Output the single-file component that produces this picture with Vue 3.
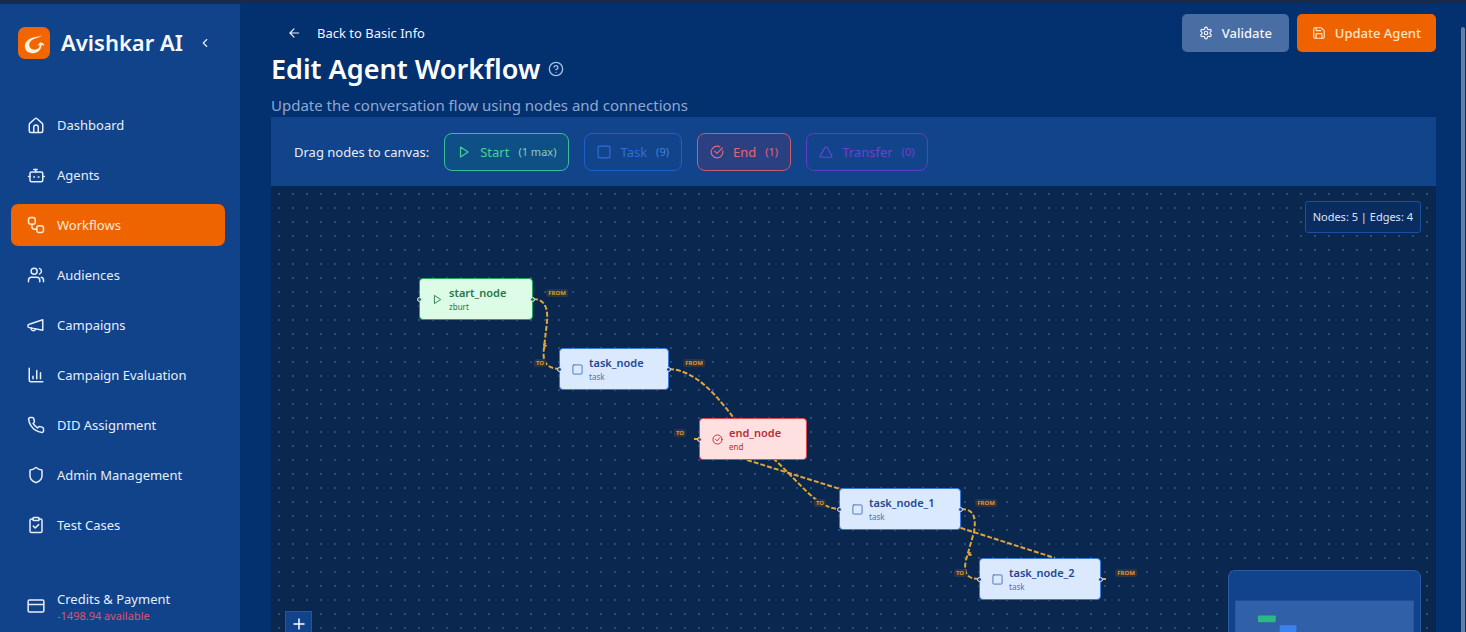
<script setup>
import { ref } from 'vue'

const icons = {
  house: '<path d="M4 9.5 10.6 3.6a2 2 0 0 1 2.8 0L20 9.5a3 3 0 0 1 1 2.2V20a2 2 0 0 1-2 2H5a2 2 0 0 1-2-2v-8.300a3 3 0 0 1 1-2.200z"/><path d="M9 22v-7a3 3 0 0 1 6 0v7"/>',
  bot: '<path d="M9 4.500h4.500M11 4.500 12 8"/><rect x="4" y="8" width="17" height="13" rx="2"/><path d="M2 14h2M21 14h2M9 14.500h1M15 14.500h1"/>',
  workflow: '<rect x="2" y="2" width="9" height="9" rx="3"/><rect x="13" y="13" width="9" height="9" rx="3"/><path d="M6.500 11v3a3.500 3.500 0 0 0 3.500 3.500h3"/>',
  users: '<circle cx="9.500" cy="7" r="4"/><path d="M2 21v-2a4 4 0 0 1 4-4h7a4 4 0 0 1 4 4v2M16.500 3.200a4 4 0 0 1 0 7.600M22 21v-2a4 4 0 0 0-3-3.870"/>',
  megaphone: '<path d="m3 11 18-6v14L3 15.500a2.300 2.300 0 0 1 0-4.500z"/><path d="M11.500 17.500a3 3 0 0 1-5.800-1.500"/>',
  chart: '<path d="M3 3v16a2 2 0 0 0 2 2h16M8 17v-3.500M13 17V6M18 17V9"/>',
  phone: '<path d="M22 16.920v3a2 2 0 0 1-2.180 2 19.790 19.790 0 0 1-8.630-3.070 19.500 19.500 0 0 1-6-6 19.790 19.790 0 0 1-3.070-8.670A2 2 0 0 1 4.110 2h3a2 2 0 0 1 2 1.720 12.840 12.840 0 0 0 .7 2.810 2 2 0 0 1-.45 2.110L8.090 9.910a16 16 0 0 0 6 6l1.270-1.270a2 2 0 0 1 2.110-.45 12.840 12.840 0 0 0 2.810.7A2 2 0 0 1 22 16.920z"/>',
  shield: '<path d="M20 13c0 5-3.500 7.500-7.660 8.950a1 1 0 0 1-.67-.01C7.500 20.500 4 18 4 13V6a1 1 0 0 1 1-1c2 0 4.500-1.200 6.240-2.720a1.170 1.170 0 0 1 1.520 0C14.510 3.810 17 5 19 5a1 1 0 0 1 1 1z"/>',
  clipboard: '<rect x="8" y="2" width="8" height="4" rx="1"/><path d="M16 4h2a2 2 0 0 1 2 2v14a2 2 0 0 1-2 2H6a2 2 0 0 1-2-2V6a2 2 0 0 1 2-2h2M8.500 13.500l2.500 2.500 4.500-4.500"/>',
  card: '<rect x="1.500" y="4" width="21" height="16" rx="2"/><path d="M2 10h20"/>',
  chevron: '<path d="m15 18-6-6 6-6"/>',
  arrow: '<path d="m12 19-7-7 7-7M20 12H5"/>',
  help: '<circle cx="12" cy="12" r="10"/><path d="M9.090 9a3 3 0 0 1 5.830 1c0 2-3 3-3 3M12 17h.01"/>',
  gear: '<path d="M12.220 2h-.44a2 2 0 0 0-2 2v.18a2 2 0 0 1-1 1.730l-.43.25a2 2 0 0 1-2 0l-.15-.08a2 2 0 0 0-2.730.73l-.22.38a2 2 0 0 0 .73 2.730l.15.1a2 2 0 0 1 1 1.720v.51a2 2 0 0 1-1 1.740l-.15.09a2 2 0 0 0-.73 2.730l.22.38a2 2 0 0 0 2.730.73l.15-.08a2 2 0 0 1 2 0l.43.25a2 2 0 0 1 1 1.730V20a2 2 0 0 0 2 2h.44a2 2 0 0 0 2-2v-.18a2 2 0 0 1 1-1.730l.43-.25a2 2 0 0 1 2 0l.15.08a2 2 0 0 0 2.730-.73l.22-.39a2 2 0 0 0-.73-2.730l-.15-.08a2 2 0 0 1-1-1.740v-.5a2 2 0 0 1 1-1.740l.15-.09a2 2 0 0 0 .73-2.730l-.22-.38a2 2 0 0 0-2.730-.73l-.15.08a2 2 0 0 1-2 0l-.43-.25a2 2 0 0 1-1-1.730V4a2 2 0 0 0-2-2z"/><circle cx="12" cy="12" r="3"/>',
  save: '<path d="M15.200 3a2 2 0 0 1 1.400.6l3.800 3.800a2 2 0 0 1 .6 1.400V19a2 2 0 0 1-2 2H5a2 2 0 0 1-2-2V5a2 2 0 0 1 2-2z"/><path d="M17 21v-7a1 1 0 0 0-1-1H8a1 1 0 0 0-1 1v7M7 3v4a1 1 0 0 0 1 1h7"/>',
  play: '<path d="M6 3.500 19 12 6 20.500z"/>',
  square: '<rect x="2" y="2" width="20" height="20" rx="2"/>',
  check: '<path d="M21.800 10A10 10 0 1 1 17 3.340M8 10.500l4 4L21.500 5"/>',
  badge: '<circle cx="12" cy="12" r="10"/><path d="m7 11 4 4 6-7"/>',
  triangle: '<path d="M13.730 4a2 2 0 0 0-3.460 0l-8 14A2 2 0 0 0 4 21h16a2 2 0 0 0 1.730-3z"/>',
  plus: '<path d="M12 2v20M2 12h20"/>',
  minus: '<path d="M3 12h18"/>',
}

const active = ref('Workflows')
const menu = [
  ['Dashboard', 'house'],
  ['Agents', 'bot'],
  ['Workflows', 'workflow'],
  ['Audiences', 'users'],
  ['Campaigns', 'megaphone'],
  ['Campaign Evaluation', 'chart'],
  ['DID Assignment', 'phone'],
  ['Admin Management', 'shield'],
  ['Test Cases', 'clipboard'],
]
const palette = [
  { name: 'Start', count: '(1 max)', icon: 'play', kind: 'start' },
  { name: 'Task', count: '(9)', icon: 'square', kind: 'task' },
  { name: 'End', count: '(1)', icon: 'check', kind: 'end' },
  { name: 'Transfer', count: '(0)', icon: 'triangle', kind: 'transfer' },
]
const nodes = [
  { name: 'start_node', type: 'zburt', kind: 'start', icon: 'play', x: 148, y: 92, w: 114 },
  { name: 'task_node', type: 'task', kind: 'task', icon: 'square', x: 288, y: 162, w: 110 },
  { name: 'end_node', type: 'end', kind: 'end', icon: 'badge', x: 428, y: 232, w: 108 },
  { name: 'task_node_1', type: 'task', kind: 'task', icon: 'square', x: 568, y: 302, w: 122 },
  { name: 'task_node_2', type: 'task', kind: 'task', icon: 'square', x: 708, y: 372, w: 122 },
]
const tags = [
  { text: 'FROM', x: 286, y: 107 },
  { text: 'TO', x: 269, y: 177 },
  { text: 'FROM', x: 423, y: 177 },
  { text: 'TO', x: 409, y: 247 },
  { text: 'TO', x: 549, y: 317 },
  { text: 'FROM', x: 715, y: 317 },
  { text: 'TO', x: 689, y: 387 },
  { text: 'FROM', x: 855, y: 387 },
]
const edges = [
  'M262 113C275 113 277 124 276 136L273 162C271 177 276 182 288 183',
  'M398 183C426 184 448 213 462 231L504 274C532 300 546 322 568 323',
  'M690 323C704 323 705 333 703 346L695 374C692 387 696 393 708 393',
  'M476 274L569 303L690 342L784 372',
  'M428 253h-6',
  'M830 393h6',
]
</script>

<template>
  <div class="app">
    <aside class="sidebar">
      <div class="brand">
        <svg class="logo" viewBox="0 0 32 32" aria-hidden="true">
          <rect width="32" height="32" rx="7" fill="#f16503" />
          <path d="M24 8.500c-2 1.800-4 2.200-6 2.700-4 1.100-6.700 3.500-6.700 6.600 0 3 2.300 4.900 5.200 4.900 3 0 5-1.800 5.300-4.700l-2.300.8 2.600-3.500 3.400 1.200.9 2.700-2.600-1.700c-.2 4.600-3.600 8.800-8.800 8.800-4.600 0-8.200-2.600-8.200-7 0-4.800 4-8 9.700-9.100 2.800-.6 5.200-.8 7.500-1.700z" fill="#fff0d8" />
        </svg>
        <span class="brand-name">Avishkar AI</span>
        <button class="collapse" aria-label="Collapse sidebar"><svg class="icon small" viewBox="0 0 24 24" v-html="icons.chevron" /></button>
      </div>
      <nav class="menu">
        <a v-for="[label, icon] in menu" :key="label" href="#" class="item" :class="{ active: active === label }" @click.prevent="active = label">
          <svg class="icon nav-icon" viewBox="0 0 24 24" v-html="icons[icon]" />
          <span>{{ label }}</span>
        </a>
        <a href="#" class="item credits" @click.prevent>
          <svg class="icon nav-icon" viewBox="0 0 24 24" v-html="icons.card" />
          <span class="stack"><span>Credits &amp; Payment</span><span class="balance">-1498.94 available</span></span>
        </a>
      </nav>
    </aside>

    <main class="main">
      <header class="header">
        <div class="heading">
          <a class="back" href="#" @click.prevent><svg class="icon small" viewBox="0 0 24 24" v-html="icons.arrow" />Back to Basic Info</a>
          <div class="title-row">
            <h1>Edit Agent Workflow</h1>
            <button class="help" aria-label="Help"><svg class="icon" viewBox="0 0 24 24" v-html="icons.help" /></button>
          </div>
          <p class="subtitle">Update the conversation flow using nodes and connections</p>
        </div>
        <div class="actions">
          <button class="btn validate"><svg class="icon small" viewBox="0 0 24 24" v-html="icons.gear" />Validate</button>
          <button class="btn update"><svg class="icon small" viewBox="0 0 24 24" v-html="icons.save" />Update Agent</button>
        </div>
      </header>

      <section class="palette">
        <span class="hint">Drag nodes to canvas:</span>
        <button v-for="p in palette" :key="p.name" class="chip" :class="p.kind" draggable="true">
          <svg class="icon small" viewBox="0 0 24 24" v-html="icons[p.icon]" />
          <span>{{ p.name }}</span>
          <span class="count">{{ p.count }}</span>
        </button>
      </section>

      <section class="canvas">
        <svg class="edges" aria-hidden="true">
          <path v-for="d in edges" :key="d" :d="d" />
          <circle cx="274" cy="159" r="1" />
          <circle cx="699" cy="368" r="1" />
        </svg>
        <span v-for="(t, i) in tags" :key="i" class="tag" :style="{ left: t.x + 'px', top: t.y + 'px' }">{{ t.text }}</span>
        <div v-for="n in nodes" :key="n.name" class="node" :class="n.kind" :style="{ left: n.x + 'px', top: n.y + 'px', width: n.w + 'px' }">
          <svg class="icon node-icon" viewBox="0 0 24 24" v-html="icons[n.icon]" />
          <span class="stack"><strong>{{ n.name }}</strong><small>{{ n.type }}</small></span>
          <i class="port in"></i>
          <i v-if="n.kind !== 'end'" class="port out"></i>
        </div>
        <div class="stats">Nodes: 5 | Edges: 4</div>
        <div class="controls">
          <button aria-label="Zoom in"><svg class="icon" viewBox="0 0 24 24" v-html="icons.plus" /></button>
          <button aria-label="Zoom out"><svg class="icon" viewBox="0 0 24 24" v-html="icons.minus" /></button>
          <button aria-label="Fit view"><svg class="icon" viewBox="0 0 24 24" v-html="icons.square" /></button>
          <button aria-label="Run"><svg class="icon" viewBox="0 0 24 24" v-html="icons.play" /></button>
        </div>
        <svg class="minimap" viewBox="0 0 193 145" aria-hidden="true">
          <rect x="6" y="30" width="181" height="90" fill="#2f60a8" />
          <g>
            <rect x="29" y="45" width="18" height="7" rx="1" fill="#2fb887" />
            <rect x="51" y="55" width="17" height="7" rx="1" fill="#3b82f0" />
            <rect x="73" y="66" width="17" height="7" rx="1" fill="#ef4444" />
            <rect x="95" y="77" width="19" height="7" rx="1" fill="#3b82f0" />
            <rect x="117" y="88" width="19" height="7" rx="1" fill="#3b82f0" />
          </g>
        </svg>
      </section>
    </main>
    <div class="scrollbar"></div>
  </div>
</template>

<style>
body {
  background: #03306f;
}
</style>

<style scoped>
* {
  box-sizing: border-box;
}
.app {
  position: relative;
  display: flex;
  height: 100vh;
  overflow: hidden;
  border-top: 4px solid #1a2a4b;
  background: #03306f;
  color: #e6eefb;
  font-family: "Noto Sans", "Open Sans", sans-serif;
  font-size: 13px;
  line-height: 20px;
}
button {
  margin: 0;
  padding: 0;
  border: 0;
  background: none;
  color: inherit;
  font: inherit;
  cursor: pointer;
}
a {
  color: inherit;
  text-decoration: none;
}
.icon {
  display: block;
  flex: none;
  fill: none;
  stroke: currentColor;
  stroke-width: 2;
  stroke-linecap: round;
  stroke-linejoin: round;
}
.small {
  width: 14px;
  height: 14px;
}
.sidebar {
  flex: none;
  width: 240px;
  background: #11438a;
}
.brand {
  display: flex;
  align-items: center;
  height: 78px;
  padding: 0 28px 0 18px;
}
.logo {
  flex: none;
  width: 32px;
  height: 32px;
}
.brand-name {
  margin-left: 11px;
  padding-bottom: 2px;
  color: #f6f9ff;
  font-size: 22px;
  font-weight: 600;
  line-height: 32px;
  white-space: nowrap;
}
.collapse {
  margin-left: auto;
}
.menu {
  display: flex;
  flex-direction: column;
  gap: 8px;
  padding: 22px 15px 0 11px;
}
.item {
  display: flex;
  align-items: center;
  gap: 12px;
  height: 42px;
  padding: 0 16px;
  border-radius: 7px;
  white-space: nowrap;
}
.item.active {
  background: #ee6400;
  color: #ffe9cf;
}
.nav-icon {
  width: 18px;
  height: 18px;
}
.stack {
  display: flex;
  flex-direction: column;
}
.credits {
  margin-top: 31px;
}
.balance {
  color: #d9566e;
  font-size: 11px;
  line-height: 14px;
}
.main {
  flex: 1;
  min-width: 0;
  padding: 0 30px 0 31px;
}
.header {
  display: flex;
  justify-content: space-between;
  padding-top: 10px;
}
.heading {
  padding-top: 9px;
}
.back {
  display: flex;
  align-items: center;
  gap: 16px;
  width: max-content;
  padding-left: 16px;
  color: #f0f5ff;
}
h1 {
  margin: 0;
  color: #fff;
  font-size: 27px;
  font-weight: 600;
  line-height: 36px;
}
.title-row {
  display: flex;
  align-items: center;
  gap: 8px;
  padding-top: 8px;
}
.help {
  color: #a9bfe2;
}
.help .icon {
  width: 16px;
  height: 16px;
}
.subtitle {
  margin: 6px 0 0;
  color: #8fa8d0;
  font-size: 15px;
  line-height: 24px;
}
.actions {
  display: flex;
  align-items: flex-start;
  gap: 8px;
}
.btn {
  display: flex;
  align-items: center;
  gap: 9px;
  height: 38px;
  border-radius: 5px;
  font-size: 13px;
  font-weight: 500;
  white-space: nowrap;
}
.validate {
  padding: 0 17px;
  background: #486ea3;
  color: #f3f7ff;
}
.update {
  padding: 0 15px;
  background: #ee6300;
  color: #ffe3c4;
}
.palette {
  display: flex;
  align-items: center;
  gap: 15px;
  height: 69px;
  padding-left: 23px;
  background: #12448b;
}
.chip {
  display: flex;
  align-items: center;
  gap: 9px;
  height: 38px;
  padding: 0 12px;
  border: 1px solid;
  border-radius: 8px;
  white-space: nowrap;
}
.count {
  font-size: 11px;
}
.chip.start {
  border-color: #38bf98;
  background: #0e5086;
  color: #45d09c;
}
.chip.start .count {
  color: #8fc9bd;
}
.chip.task {
  border-color: #1f60c6;
  color: #2d6fd8;
}
.chip.task .count {
  color: #4380dd;
}
.chip.end {
  border-color: #c95b72;
  background: #2b4080;
  color: #e0687c;
}
.chip.transfer {
  border-color: #5f3cc4;
  color: #743fd0;
}
.canvas {
  position: relative;
  height: 544px;
  overflow: hidden;
  background-color: #0a2750;
  background-image: radial-gradient(circle, #2f4b76 0, #2f4b76 1px, transparent 1px);
  background-size: 14px 14px;
  background-position: 1px 1px;
}
.edges {
  position: absolute;
  inset: 0;
  width: 100%;
  height: 100%;
  fill: none;
  stroke: #e0a63a;
  stroke-width: 2;
  stroke-dasharray: 5 2;
}
.tag {
  position: absolute;
  padding: 0 2px;
  border-radius: 2px;
  background: #2c3442;
  color: #d99a2b;
  font-size: 6px;
  font-weight: 700;
  line-height: 8px;
  transform: translate(-50%, -50%);
}
.node {
  position: absolute;
  display: flex;
  align-items: center;
  gap: 6px;
  height: 42px;
  padding-left: 12px;
  border: 1px solid;
  border-radius: 4px;
}
.node-icon {
  width: 11px;
  height: 11px;
}
.node strong {
  font-size: 11px;
  font-weight: 600;
  line-height: 16px;
}
.node small {
  font-size: 8px;
  line-height: 12px;
}
.node.start {
  border-color: #22a559;
  background: #dcfce7;
  color: #237a45;
}
.node.task {
  border-color: #3b78d8;
  background: #dbe9fe;
  color: #1f4796;
}
.node.task small,
.node.task .node-icon {
  color: #4470bd;
}
.node.end {
  border-color: #d9484f;
  background: #fee0e0;
  color: #b92f35;
}
.port {
  position: absolute;
  top: 18px;
  width: 5px;
  height: 5px;
  border: 1px solid #dce8fb;
  border-radius: 50%;
  background: currentColor;
}
.port.in {
  left: -3px;
}
.port.out {
  right: -3px;
}
.stats {
  position: absolute;
  top: 15px;
  right: 15px;
  padding: 5px 7px;
  border: 1px solid #1b509e;
  border-radius: 3px;
  background: #0a2c60;
  color: #dbe6f8;
  font-size: 11px;
}
.controls {
  position: absolute;
  bottom: 15px;
  left: 14px;
  display: flex;
  flex-direction: column;
}
.controls button {
  display: grid;
  place-items: center;
  width: 27px;
  height: 26px;
  border: 1px solid #2058a8;
  background: #11438a;
  color: #fff;
}
.controls .icon {
  width: 12px;
  height: 12px;
  stroke-width: 3;
}
.minimap {
  position: absolute;
  right: 15px;
  bottom: 15px;
  width: 193px;
  height: 145px;
  border: 1px solid #2a5ba5;
  border-radius: 7px;
  background: #11438c;
}
.scrollbar {
  position: absolute;
  top: 23px;
  right: 1px;
  bottom: 0;
  width: 4px;
  border-radius: 2px 2px 0 0;
  background: #667da3;
}
</style>
